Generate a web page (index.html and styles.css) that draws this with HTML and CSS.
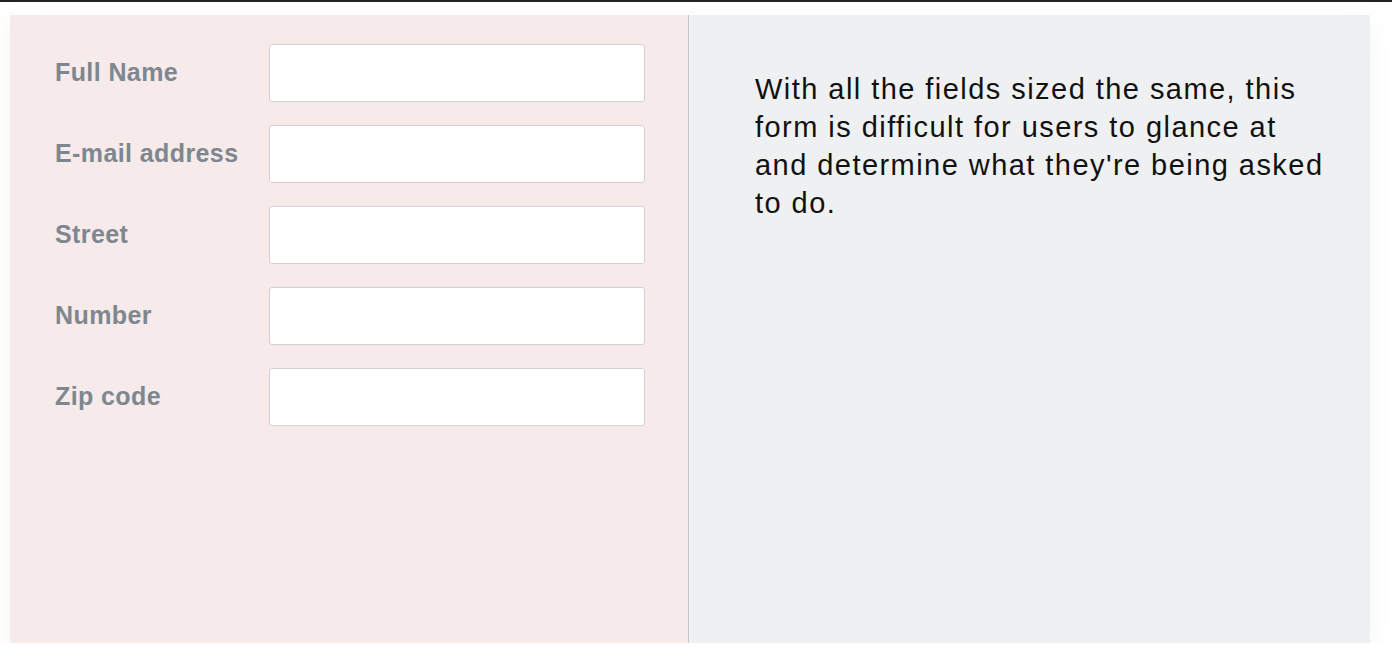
FILE: index.html
```html
<!DOCTYPE html>
<html>
  <head>
    <title>Form sizing</title>
    <link rel="stylesheet" href="styles.css">
  </head>
  <body>
    <div class="topbar"></div>

    <div class="slide">
      <div class="form-side">
        <div class="row">
          <label for="fullName">Full Name</label>
          <input type="text" id="fullName">
        </div>
        <div class="row">
          <label for="email">E-mail address</label>
          <input type="text" id="email">
        </div>
        <div class="row">
          <label for="street">Street</label>
          <input type="text" id="street">
        </div>
        <div class="row">
          <label for="number">Number</label>
          <input type="text" id="number">
        </div>
        <div class="row">
          <label for="zip">Zip code</label>
          <input type="text" id="zip">
        </div>
      </div>

      <div class="note-side">
        <p class="note">With all the fields sized the same, this form is difficult for users to glance at and determine what they're being asked to do.</p>
      </div>
    </div>
  </body>
</html>
```

FILE: styles.css
```css
body {
  margin: 0;
  background-color: #fff;
  font-family: "Liberation Sans", Arial, sans-serif;
}

.topbar {
  height: 2px;
  background-color: #222;
}

.slide {
  display: flex;
  margin: 13px 22px 0 10px;
  height: 628px;
  box-shadow: 0 8px 24px rgba(220, 226, 224, 0.35);
}

.form-side {
  width: 679px;
  background-color: #f6eaea;
  border-right: 1px solid #c6c6c6;
  padding: 29px 0 0 45px;
  box-sizing: border-box;
}

.row {
  display: flex;
  align-items: center;
  margin-bottom: 23px;
}

.row label {
  width: 214px;
  font-size: 25px;
  font-weight: bold;
  color: #7e878f;
  letter-spacing: 0.4px;
  margin-top: -2px;
}

.row input[type="text"] {
  width: 376px;
  height: 58px;
  box-sizing: border-box;
  border: 1px solid #d2d2d4;
  border-radius: 3px;
  background-color: #fff;
  margin: 0;
}

.note-side {
  flex: 1;
  background-color: #eff0f2;
  padding: 55px 34px 0 66px;
}

.note {
  margin: 0;
  font-size: 29px;
  line-height: 38px;
  letter-spacing: 1.45px;
  color: #111;
}
```
